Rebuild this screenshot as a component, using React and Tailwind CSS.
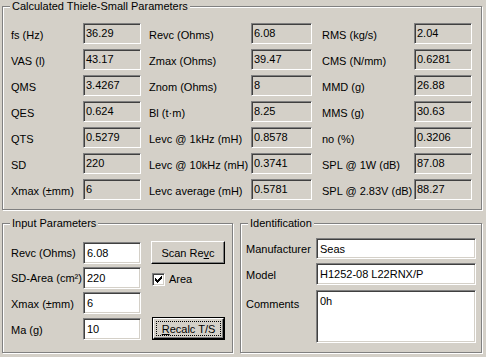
import React from 'react';

const etched = 'border border-[#808080] shadow-[inset_1px_1px_0_#ffffff,1px_1px_0_#ffffff]';
const sunken = 'border border-[#808080] border-b-white border-r-white shadow-[inset_1px_1px_0_#404040,inset_-1px_-1px_0_#d4d0c8]';
const raised = 'border border-white border-b-black border-r-black shadow-[inset_-1px_-1px_0_#808080,inset_1px_1px_0_#d4d0c8]';

const GroupBox = ({ title, className, children }) => (
    <div className={`relative ${etched} ${className}`}>
        <span className="absolute -top-[8px] left-[7px] px-[2px] bg-[#d4d0c8] leading-[14px]">{title}</span>
        {children}
    </div>
);

const ReadOnly = ({ value, className = '' }) => (
    <div className={`h-[21px] ${sunken} bg-[#d4d0c8] pl-[2px] pt-[2px] leading-[14px] ${className}`}>{value}</div>
);

const Field = ({ value, className = '' }) => (
    <div className={`${sunken} bg-white pl-[3px] pt-[3px] leading-[14px] ${className}`}>{value}</div>
);

const calcRows = [
    ['fs (Hz)', '36.29', 'Revc (Ohms)', '6.08', 'RMS (kg/s)', '2.04'],
    ['VAS (l)', '43.17', 'Zmax (Ohms)', '39.47', 'CMS (N/mm)', '0.6281'],
    ['QMS', '3.4267', 'Znom (Ohms)', '8', 'MMD (g)', '26.88'],
    ['QES', '0.624', 'Bl (t·m)', '8.25', 'MMS (g)', '30.63'],
    ['QTS', '0.5279', 'Levc @ 1kHz (mH)', '0.8578', 'no (%)', '0.3206'],
    ['SD', '220', 'Levc @ 10kHz (mH)', '0.3741', 'SPL @ 1W (dB)', '87.08'],
    ['Xmax (±mm)', '6', 'Levc average (mH)', '0.5781', 'SPL @ 2.83V (dB)', '88.27'],
];

const Check = () => (
    <div className={`w-[13px] h-[13px] ${sunken} bg-white flex items-center justify-center`}>
        <svg width="7" height="7" viewBox="0 0 7 7">
            <path d="M0 2h1v1h1v1h1v-1h1v-1h1v-1h1v-1h1v3h-1v1h-1v1h-1v1h-1v1h-1v-1h-1v-1h-1v-1h-1z" fill="#000" />
        </svg>
    </div>
);

export default function App() {
    return (
        <div className="w-[486px] h-[357px] bg-[#d4d0c8] overflow-hidden text-[11px] text-black font-['Liberation_Sans',Arial,sans-serif] pt-[6px] pl-[2px]">
            {/* Calculated parameters */}
            <GroupBox title="Calculated Thiele-Small Parameters" className="w-[480px] h-[204px] pt-[16px] pl-[8px]">
                <div className="flex flex-col gap-[5px]">
                    {calcRows.map((r) => (
                        <div key={r[0]} className="flex items-center h-[21px] whitespace-nowrap">
                            <span className="w-[72px] pt-[3px]">{r[0]}</span>
                            <ReadOnly value={r[1]} className="w-[58px]" />
                            <span className="w-[102px] ml-[8px] pt-[3px]">{r[2]}</span>
                            <ReadOnly value={r[3]} className="w-[61px]" />
                            <span className="w-[92px] ml-[10px] pt-[3px]">{r[4]}</span>
                            <ReadOnly value={r[5]} className="w-[58px]" />
                        </div>
                    ))}
                </div>
            </GroupBox>

            <div className="flex gap-[7px] mt-[13px]">
                {/* Input parameters */}
                <GroupBox title="Input Parameters" className="w-[231px] h-[130px] pt-[18px] pl-[8px]">
                    <div className="flex flex-col gap-[4px] whitespace-nowrap">
                        <div className="flex items-center h-[21px]">
                            <span className="w-[72px] pt-[2px]">Revc (Ohms)</span>
                            <Field value="6.08" className="w-[58px] h-[22px]" />
                            <button className={`ml-[10px] w-[74px] h-[23px] ${raised} bg-[#d4d0c8] leading-[14px]`}>
                                Scan Re<span className="underline">v</span>c
                            </button>
                        </div>
                        <div className="flex items-center h-[21px]">
                            <span className="w-[72px] pt-[2px]">SD-Area (cm²)</span>
                            <Field value="220" className="w-[58px] h-[22px]" />
                            <div className="ml-[11px] flex items-center gap-[4px] pt-[4px]">
                                <Check />
                                <span>Area</span>
                            </div>
                        </div>
                        <div className="flex items-center h-[21px]">
                            <span className="w-[72px] pt-[4px]">Xmax (±mm)</span>
                            <Field value="6" className="w-[58px] h-[22px]" />
                        </div>
                        <div className="flex items-center h-[21px] mt-[1px]">
                            <span className="w-[72px] pt-[3px]">Ma (g)</span>
                            <Field value="10" className="w-[58px] h-[22px]" />
                            <button className="ml-[11px] w-[73px] h-[23px] border border-black bg-[#d4d0c8] p-0">
                                <div className={`w-full h-full ${raised} flex items-center justify-center p-[2px]`}>
                                    <div className="w-full h-full border border-dotted border-black flex items-center justify-center leading-[14px]">
                                        <span><span className="underline">R</span>ecalc T/S</span>
                                    </div>
                                </div>
                            </button>
                        </div>
                    </div>
                </GroupBox>

                {/* Identification */}
                <GroupBox title="Identification" className="w-[242px] h-[130px] pt-[14px] pl-[5px]">
                    <div className="flex flex-col gap-[4px] whitespace-nowrap">
                        <div className="flex items-center">
                            <span className="w-[70px] pt-[2px]">Manufacturer</span>
                            <Field value="Seas" className="w-[160px] h-[21px]" />
                        </div>
                        <div className="flex items-center">
                            <span className="w-[70px] pt-[2px]">Model</span>
                            <Field value="H1252-08 L22RNX/P" className="w-[160px] h-[22px]" />
                        </div>
                        <div className="flex items-start mt-[1px]">
                            <span className="w-[70px] pt-[6px]">Comments</span>
                            <Field value="0h" className="w-[160px] h-[53px]" />
                        </div>
                    </div>
                </GroupBox>
            </div>
        </div>
    );
}
